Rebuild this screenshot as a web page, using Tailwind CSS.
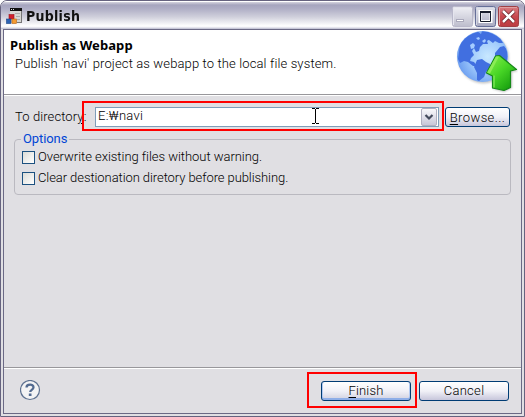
<!DOCTYPE html>
<html lang="en">
<head>
<meta charset="utf-8">
<title>Publish</title>
<script src="https://cdn.jsdelivr.net/npm/@tailwindcss/browser@4"></script>
</head>
<body class="w-[525px] h-[417px] overflow-hidden bg-white font-['Roboto','Noto_Sans_CJK_KR',sans-serif] font-light text-[13px] leading-4 text-black">
<div class="relative flex flex-col w-[525px] h-[417px] border border-[#66637f] rounded-t-[7px] bg-[#e0dfe3] overflow-hidden">
  <header class="flex items-center h-[28px] shrink-0 pl-[5px] pr-[5px] border-t border-white bg-[linear-gradient(180deg,#d5d4df_0px,#a6a5be_3px,#b0afc6_7px,#d0d0dc_15px,#ffffff_24px,#f4f4f8_25px,#b8b8cc_27px)]">
    <svg class="w-4 h-4 shrink-0" viewBox="0 0 16 16">
      <rect x="4" y="0" width="12" height="15" fill="#d7d7d3"/>
      <rect x="4" y="0" width="12" height="3" fill="#111"/>
      <path d="M5 1.5h1m1 0h1" stroke="#ddd"/>
      <path d="M9 5.5h5M10 8.5h4M11 11.5h3" stroke="#aaa"/>
      <path d="M15.5 3v12M11 14.5h4" stroke="#777"/>
      <rect x="3" y="6.500" width="5" height="4.500" fill="#d2202b" stroke="#9c1620" stroke-width=".6"/>
      <rect x=".5" y="11" width="4.500" height="4.500" fill="#2c62b4" stroke="#174487" stroke-width=".6"/>
      <rect x="6" y="11" width="4.500" height="4.500" fill="#f39a32" stroke="#b76312" stroke-width=".6"/>
    </svg>
    <h1 class="ml-[4px] text-[14px] font-bold tracking-[0.3px] font-['DejaVu_Sans',sans-serif] text-[#111] scale-x-90 origin-left">Publish</h1>
    <div class="ml-auto flex gap-[2px] pt-[2px]">
      <svg class="w-[21px] h-[21px]" viewBox="0 0 21 21">
        <defs><linearGradient id="g1" x2="0" y2="1"><stop stop-color="#f0f0f5"/><stop offset="1" stop-color="#bdbdcd"/></linearGradient></defs>
        <rect x=".5" y=".5" width="20" height="20" rx="2" fill="url(#g1)" stroke="#b9b8ca"/>
        <path d="M1.500 19V1.500H19" fill="none" stroke="#e5e5ee"/>
        <rect x="4.500" y="13.500" width="7" height="2" fill="#fff" stroke="#aaa9bb"/>
      </svg>
      <svg class="w-[21px] h-[21px]" viewBox="0 0 21 21">
        <defs><linearGradient id="g2" x2="0" y2="1"><stop stop-color="#e4e5ed"/><stop offset="1" stop-color="#a8a9c0"/></linearGradient></defs>
        <rect x=".5" y=".5" width="20" height="20" rx="2" fill="url(#g2)" stroke="#666f98"/>
        <path d="M1.500 19V1.500H19" fill="none" stroke="#d2d5e2"/>
        <rect x="5" y="5.500" width="11" height="10" fill="none" stroke="#fff" stroke-width="3"/>
        <path d="M5.500 6v9.500h10V6" fill="none" stroke="#161b2b"/>
        <path d="M5 6h11" stroke="#161b2b" stroke-width="2"/>
      </svg>
      <svg class="w-[21px] h-[21px]" viewBox="0 0 21 21">
        <defs><linearGradient id="g3" x2="0" y2="1"><stop stop-color="#d98085"/><stop offset=".5" stop-color="#c8484e"/><stop offset="1" stop-color="#bc3d42"/></linearGradient></defs>
        <rect x=".5" y=".5" width="20" height="20" rx="2" fill="url(#g3)" stroke="#a04045"/>
        <path d="M1.500 19V1.500H19" fill="none" stroke="#dfa0a2"/>
        <path d="M5 5l11 11M16 5L5 16" stroke="#642126" stroke-width="4"/>
        <path d="M5 5l11 11M16 5L5 16" stroke="#fff" stroke-width="2.500"/>
      </svg>
    </div>
  </header>

  <div class="flex flex-col flex-1 mx-[2px] mb-[2px] border border-[#6b6985]">
    <section class="flex justify-between h-[65px] shrink-0 bg-white border-b border-[#98979b] pl-[6px] pr-[3px]">
      <div>
        <h2 class="mt-[7px] text-[13px] font-bold whitespace-nowrap font-['Noto_Sans',sans-serif] tracking-[0.1px]">Publish as Webapp</h2>
        <p class="mt-[3px] ml-[5px] whitespace-nowrap tracking-[0.13px]">Publish 'navi' project as webapp to the local file system.</p>
      </div>
      <svg class="w-[64px] h-[64px] shrink-0" viewBox="0 0 64 64">
        <defs>
          <radialGradient id="sea" cx=".6" cy=".5" r=".6"><stop stop-color="#c8e8ff"/><stop offset=".5" stop-color="#a3cdfc"/><stop offset="1" stop-color="#6b9df0"/></radialGradient>
          <linearGradient id="arr" x2=".8" y2="1"><stop stop-color="#8ff04f"/><stop offset=".5" stop-color="#48d626"/><stop offset="1" stop-color="#139a0c"/></linearGradient>
          <clipPath id="globe"><circle cx="28.500" cy="26.500" r="25"/></clipPath>
          <filter id="soft" x="-20%" y="-20%" width="150%" height="150%"><feGaussianBlur stdDeviation="1"/></filter>
        </defs>
        <circle cx="29.500" cy="28" r="25.500" fill="#999" opacity=".55" filter="url(#soft)"/>
        <circle cx="28.500" cy="26.500" r="25.500" fill="url(#sea)"/>
        <g clip-path="url(#globe)" fill="#416fe0">
          <path d="M5 22l1-9L13 5l10-4 4 3 1-3 7 1 2 3 4 3-1 3-4-2-3 2 1 3-5 0-3 3-1 4-3 1-2-4-2 3 2 4-3 3-1 3 4 1 3 4-4 0-5-4-4-1-4 2-2-4z"/>
          <path d="M23 30l5-1 4 3 4 2 0 4-4 4-2 5-5 4-2-1 0-7-3-6z"/>
          <path d="M28 1l9 0 9 6 3 6-4 0-4-2-2 2-4-3-4-1 1-4z"/>
          <path d="M46 17l4-1 4 5v10l-4 3-4-3-5-2 0-6z"/>
        </g>
        <path d="M16 15l3-2 2 2-1 3-3 1zM22 8l3-1 1 2-2 1zM28 11l3-2 1 2-2 2z" fill="#a4cbff"/>
        <path d="M46 28L64 41l-6 1v16l-8 4-11-3V47l-6-3z" fill="#777" opacity=".45" filter="url(#soft)"/>
        <path d="M45.500 25.500L62.500 39.500l-6 1.500v16.500L50 60.500l-11.500-2.500V46L32.500 43 41.500 26z" fill="url(#arr)" stroke="#168918" stroke-width="1.200" stroke-linejoin="round"/>
        <path d="M42 26.500h3L36 43.500l-3-1z" fill="#8bed55"/>
        <path d="M40 45.500v12" fill="none" stroke="#95f36a" stroke-width="1"/>
      </svg>
    </section>

    <main class="flex flex-col flex-1 border-t border-white px-[10px]">
      <div class="flex h-[20px] mt-[11px] mr-[1px] -ml-px">
        <label class="w-[82px] shrink-0 pt-[2px] pl-[2px] whitespace-nowrap tracking-[0.1px]">To director<u class="underline-offset-2">y</u>:</label>
        <div class="relative flex w-[344px] h-[20px] border border-[#7f9db9] bg-white">
          <span class="pl-[2px] whitespace-nowrap tracking-[0.3px]">E:₩navi</span>
          <svg class="ml-auto w-[17px] h-[18px]" viewBox="0 0 17 18">
            <defs><linearGradient id="drop" x2="0" y2="1"><stop stop-color="#fafafc"/><stop offset="1" stop-color="#c6c5d7"/></linearGradient></defs>
            <rect x=".5" y=".5" width="15" height="17" rx="1.500" fill="url(#drop)" stroke="#b0afbf"/>
            <path d="M4.500 7L8 10.500 11.500 7" fill="none" stroke="#444a5c" stroke-width="2.200"/>
          </svg>
          <svg class="absolute left-[216px] top-0 w-[7px] h-[16px]" viewBox="0 0 7 16"><path d="M0 .5h3M4 .5h3M3.500 1v14M0 15.500h3M4 15.500h3" stroke="#000" fill="none"/></svg>
        </div>
        <button class="ml-[6px] w-[65px] h-[20px] border border-[#003c74] rounded-[3px] bg-gradient-to-b from-white via-[#f1f1f7] to-[#c7c6db] leading-[17px] whitespace-nowrap tracking-[0.4px]"><u class="underline-offset-2">B</u>rowse...</button>
      </div>

      <fieldset class="mt-[4px] h-[64px] w-[497px] border border-[#bab9c0] rounded-[4px] px-[7px]">
        <legend class="px-[2px] -ml-[1px] text-[#0046d5] leading-4 tracking-[-0.1px] font-normal">Options</legend>
        <div class="flex flex-col gap-[5px] pt-[2px]">
          <label class="flex items-center h-4 whitespace-nowrap tracking-[-0.04px]"><span class="w-[13px] h-[13px] mr-[3px] border border-[#1c5180] bg-gradient-to-br from-[#dcdcd7] to-white"></span>Overwrite existing files without warning.</label>
          <label class="flex items-center h-4 whitespace-nowrap tracking-[-0.08px]"><span class="w-[13px] h-[13px] mr-[3px] border border-[#1c5180] bg-gradient-to-br from-[#dcdcd7] to-white"></span>Clear destionation diretory before publishing.</label>
        </div>
      </fieldset>
    </main>

    <footer class="flex items-center h-[46px] shrink-0 border-t border-[#98979b] shadow-[inset_0_1px_0_#fff] pl-[16px] pr-[12px]">
      <svg class="w-[21px] h-[21px]" viewBox="0 0 21 21">
        <circle cx="10" cy="10" r="9.500" fill="#f3f3f4" stroke="#5d7190" stroke-width="1.200"/>
        <path d="M6.500 7.500C6.500 4 13.500 3.500 13.500 7.300c0 2.600-3.300 2.500-3.300 4.800" fill="none" stroke="#536b91" stroke-width="2.300"/>
        <rect x="8.800" y="13.500" width="2.700" height="2.500" fill="#536b91"/>
      </svg>
      <button class="ml-auto w-[90px] h-[20px] border border-[#003c74] rounded-[3px] bg-gradient-to-b from-white via-[#f1f1f7] to-[#d0d0e0] shadow-[inset_0_-2px_0_#8eaee8,inset_1px_0_0_#b3caf2,inset_-1px_0_0_#b3caf2] leading-[17px] tracking-[0.15px]"><u class="underline-offset-2">F</u>inish</button>
      <button class="ml-[8px] w-[90px] h-[20px] border border-[#003c74] rounded-[3px] bg-gradient-to-b from-white via-[#f1f1f7] to-[#c7c6db] leading-[17px] tracking-[0.3px]">Cancel</button>
    </footer>
  </div>
  <div class="absolute left-[81px] top-[100px] w-[362px] h-[30px] border-2 border-[#ff0000]"></div>
  <div class="absolute left-[306px] top-[371px] w-[110px] h-[36px] border-2 border-[#ff0000]"></div>
</div>
</body>
</html>
